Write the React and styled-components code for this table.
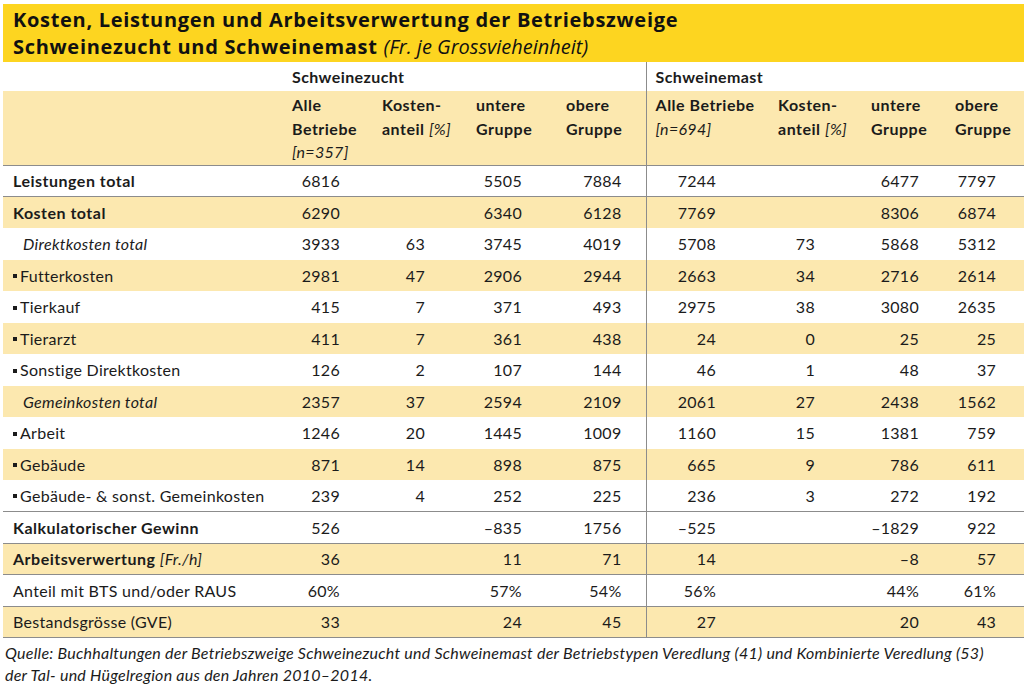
import React from 'react';
import styled, { createGlobalStyle } from 'styled-components';

const GlobalStyle = createGlobalStyle`
  html, body {
    margin: 0;
    padding: 0;
    background: #ffffff;
  }
  body {
    font-family: Lato, "Open Sans", sans-serif;
    color: #1b1b1b;
  }
`;

const Page = styled.div`
  width: 1021px;
  padding: 4px 0 0 3px;
`;

const TitleBar = styled.div`
  background: #fdd520;
  height: 58px;
  box-sizing: border-box;
  padding: 2px 0 0 10px;
  font-family: "Open Sans", Lato, sans-serif;
  font-size: 20px;
  line-height: 27px;
  font-weight: 700;
  letter-spacing: 0.7px;
  color: #111;
`;

const TitleNote = styled.span`
  font-weight: 400;
  font-style: italic;
  letter-spacing: 0;
`;

const Table = styled.table`
  border-collapse: collapse;
  table-layout: fixed;
  width: 1021px;
  font-size: 16px;
  letter-spacing: 0.3px;
`;

const Row = styled.tr`
  background: ${(p) => (p.$tan ? '#fce8af' : '#ffffff')};
  height: 31.5px;
  & > td {
    border-bottom: ${(p) => (p.$line ? '1px solid #8c8c8c' : 'none')};
  }
`;

const GroupRow = styled.tr`
  height: 29px;
`;

const HeadRow = styled.tr`
  background: #fce8af;
  height: 74px;
  & > th {
    border-bottom: 1px solid #8c8c8c;
  }
`;

const GroupCell = styled.th`
  text-align: left;
  padding: 0 0 0 ${(p) => p.$pl}px;
  font-weight: 700;
  letter-spacing: 0.4px;
  vertical-align: middle;
  border-left: ${(p) => (p.$split ? '1px solid #8c8c8c' : 'none')};
`;

const HeadCell = styled.th`
  text-align: left;
  vertical-align: top;
  padding: 2px 0 0 ${(p) => p.$pl}px;
  line-height: 23.5px;
  font-weight: 700;
  letter-spacing: 0.5px;
  border-left: ${(p) => (p.$split ? '1px solid #8c8c8c' : 'none')};
`;

const Unit = styled.span`
  font-weight: 400;
  font-style: italic;
  letter-spacing: 0.3px;
`;

const LabelCell = styled.td`
  padding: 0 0 0 ${(p) => (p.$kind === 'sub' ? 20 : 10)}px;
  white-space: nowrap;
  font-weight: ${(p) => (p.$kind === 'bold' ? 700 : 400)};
  font-style: ${(p) => (p.$kind === 'sub' ? 'italic' : 'normal')};
  letter-spacing: ${(p) => (p.$kind === 'bold' ? 0.5 : 0.3)}px;
`;

const Bullet = styled.span`
  display: inline-block;
  width: 4px;
  height: 4px;
  background: #1b1b1b;
  margin: 0 3px 3px 0;
  vertical-align: middle;
`;

const NumCell = styled.td`
  text-align: right;
  padding: 0 ${(p) => p.$pr}px 0 0;
  white-space: nowrap;
  border-left: ${(p) => (p.$split ? '1px solid #8c8c8c' : 'none')};
`;

const Source = styled.p`
  margin: 4px 0 0 2px;
  font-size: 16px;
  line-height: 22px;
  font-style: italic;
  letter-spacing: 0.25px;
  color: #1b1b1b;
`;

const cols = [
  { w: 279 },
  { w: 90, pl: 10, pr: 32 },
  { w: 94, pl: 10, pr: 41 },
  { w: 90, pl: 10, pr: 34 },
  { w: 90, pl: 10, pr: 24 },
  { w: 122, pl: 9, pr: 52, split: true },
  { w: 93, pl: 10, pr: 46 },
  { w: 84, pl: 10, pr: 26 },
  { w: 79, pl: 10, pr: 28 },
];

const heads = [
  <>Alle<br />Betriebe<br /><Unit>[n=357]</Unit></>,
  <>Kosten-<br />anteil <Unit>[%]</Unit></>,
  <>untere<br />Gruppe</>,
  <>obere<br />Gruppe</>,
  <>Alle Betriebe<br /><Unit>[n=694]</Unit></>,
  <>Kosten-<br />anteil <Unit>[%]</Unit></>,
  <>untere<br />Gruppe</>,
  <>obere<br />Gruppe</>,
];

const rows = [
  { label: 'Leistungen total', kind: 'bold', line: true, v: ['6816', '', '5505', '7884', '7244', '', '6477', '7797'] },
  { label: 'Kosten total', kind: 'bold', tan: true, v: ['6290', '', '6340', '6128', '7769', '', '8306', '6874'] },
  { label: 'Direktkosten total', kind: 'sub', v: ['3933', '63', '3745', '4019', '5708', '73', '5868', '5312'] },
  { label: 'Futterkosten', kind: 'bullet', tan: true, v: ['2981', '47', '2906', '2944', '2663', '34', '2716', '2614'] },
  { label: 'Tierkauf', kind: 'bullet', v: ['415', '7', '371', '493', '2975', '38', '3080', '2635'] },
  { label: 'Tierarzt', kind: 'bullet', tan: true, v: ['411', '7', '361', '438', '24', '0', '25', '25'] },
  { label: 'Sonstige Direktkosten', kind: 'bullet', v: ['126', '2', '107', '144', '46', '1', '48', '37'] },
  { label: 'Gemeinkosten total', kind: 'sub', tan: true, v: ['2357', '37', '2594', '2109', '2061', '27', '2438', '1562'] },
  { label: 'Arbeit', kind: 'bullet', v: ['1246', '20', '1445', '1009', '1160', '15', '1381', '759'] },
  { label: 'Gebäude', kind: 'bullet', tan: true, v: ['871', '14', '898', '875', '665', '9', '786', '611'] },
  { label: 'Gebäude- & sonst. Gemeinkosten', kind: 'bullet', line: true, v: ['239', '4', '252', '225', '236', '3', '272', '192'] },
  { label: 'Kalkulatorischer Gewinn', kind: 'bold', line: true, v: ['526', '', '–835', '1756', '–525', '', '–1829', '922'] },
  { label: 'Arbeitsverwertung', unit: '[Fr./h]', kind: 'bold', tan: true, line: true, v: ['36', '', '11', '71', '14', '', '–8', '57'] },
  { label: 'Anteil mit BTS und/oder RAUS', kind: 'plain', line: true, v: ['60%', '', '57%', '54%', '56%', '', '44%', '61%'] },
  { label: 'Bestandsgrösse (GVE)', kind: 'plain', tan: true, line: true, v: ['33', '', '24', '45', '27', '', '20', '43'] },
];

const App = () => {
  return (
    <Page>
      <GlobalStyle />
      <TitleBar>
        Kosten, Leistungen und Arbeitsverwertung der Betriebszweige
        <br />
        Schweinezucht und Schweinemast <TitleNote>(Fr. je Grossvieheinheit)</TitleNote>
      </TitleBar>

      <Table>
        <colgroup>
          {cols.map((c, i) => (
            <col key={i} style={{ width: c.w }} />
          ))}
        </colgroup>
        <thead>
          <GroupRow>
            <GroupCell $pl={10} />
            <GroupCell colSpan={4} $pl={10}>Schweinezucht</GroupCell>
            <GroupCell colSpan={4} $pl={9} $split>Schweinemast</GroupCell>
          </GroupRow>
          <HeadRow>
            <HeadCell $pl={10} />
            {heads.map((h, i) => (
              <HeadCell key={i} $pl={cols[i + 1].pl} $split={cols[i + 1].split}>
                {h}
              </HeadCell>
            ))}
          </HeadRow>
        </thead>
        <tbody>
          {rows.map((r) => (
            <Row key={r.label} $tan={r.tan} $line={r.line}>
              <LabelCell $kind={r.kind}>
                {r.kind === 'bullet' && <Bullet />}
                {r.label}
                {r.unit && <> <Unit>{r.unit}</Unit></>}
              </LabelCell>
              {r.v.map((val, i) => (
                <NumCell key={i} $pr={cols[i + 1].pr} $split={cols[i + 1].split}>
                  {val}
                </NumCell>
              ))}
            </Row>
          ))}
        </tbody>
      </Table>

      <Source>
        Quelle: Buchhaltungen der Betriebszweige Schweinezucht und Schweinemast der Betriebstypen Veredlung (41) und Kombinierte Veredlung (53)
        <br />
        der Tal- und Hügelregion aus den Jahren 2010–2014.
      </Source>
    </Page>
  );
};

export default App;
